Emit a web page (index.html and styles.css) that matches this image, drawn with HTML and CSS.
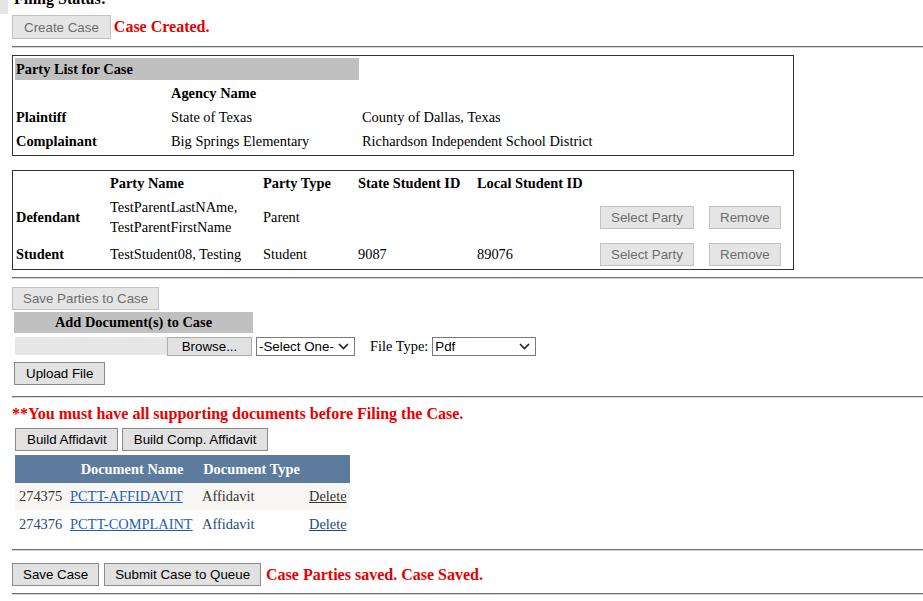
FILE: index.html
```html
<!DOCTYPE html>
<html>
<head>
<meta charset="utf-8">
<title>Case</title>
<link rel="stylesheet" href="styles.css">
</head>
<body>
<div class="top">
  <div class="gutter"></div>
  <div class="filing">Filing Status:</div>
</div>
<div class="page">
  <div class="row create-row">
    <button class="btn create" disabled>Create Case</button>
    <span class="msg">Case Created.</span>
  </div>
  <hr class="rule r1">

  <table class="box agency">
    <colgroup><col class="a1"><col class="a2"><col class="a3"></colgroup>
    <tr><td colspan="2" class="caption-cell">Party List for Case</td><td></td></tr>
    <tr><td></td><th>Agency Name</th><td></td></tr>
    <tr><th>Plaintiff</th><td>State of Texas</td><td>County of Dallas, Texas</td></tr>
    <tr class="last"><th>Complainant</th><td>Big Springs Elementary</td><td>Richardson Independent School District</td></tr>
  </table>

  <table class="box parties">
    <colgroup><col class="p1"><col class="p2"><col class="p3"><col class="p4"><col class="p5"><col class="p6"><col class="p7"></colgroup>
    <tr class="head"><td></td><th>Party Name</th><th>Party Type</th><th>State Student ID</th><th>Local Student ID</th><td></td><td></td></tr>
    <tr class="def"><th>Defendant</th><td class="two">TestParentLastNAme,<br>TestParentFirstName</td><td>Parent</td><td></td><td></td><td><button class="btn sm" disabled>Select Party</button></td><td><button class="btn sm" disabled>Remove</button></td></tr>
    <tr class="stu"><th>Student</th><td>TestStudent08, Testing</td><td>Student</td><td>9087</td><td>89076</td><td><button class="btn sm" disabled>Select Party</button></td><td><button class="btn sm" disabled>Remove</button></td></tr>
  </table>

  <hr class="rule r2">
  <button class="btn sm save-parties" disabled>Save Parties to Case</button>

  <div class="docs">
    <div class="doc-head">Add Document(s) to Case</div>
    <div class="row file-row">
      <div class="file"><span class="file-field"></span><span class="browse">Browse...</span></div>
      <div class="select sel1"><span>-Select One-</span><svg width="11" height="7" viewBox="0 0 11 7"><path d="M1 1 L5.5 5.5 L10 1" fill="none" stroke="#222" stroke-width="1.6"/></svg></div>
      <span class="ftype">File Type:</span>
      <div class="select sel2"><span>Pdf</span><svg width="11" height="7" viewBox="0 0 11 7"><path d="M1 1 L5.5 5.5 L10 1" fill="none" stroke="#222" stroke-width="1.6"/></svg></div>
    </div>
    <button class="btn sm upload">Upload File</button>
  </div>

  <hr class="rule r3">
  <div class="warn">**You must have all supporting documents before Filing the Case.</div>
  <div class="row build-row">
    <button class="btn sm wide">Build Affidavit</button>
    <button class="btn sm wide">Build Comp. Affidavit</button>
  </div>

  <table class="grid">
    <colgroup><col class="g-c1"><col class="g-c2"><col class="g-c3"><col class="g-c4"></colgroup>
    <tr class="ghead"><th></th><th>Document Name</th><th>Document Type</th><th></th></tr>
    <tr class="g1"><td>274375</td><td><a href="#" class="doclink">PCTT-AFFIDAVIT</a></td><td>Affidavit</td><td><a href="#" class="del">Delete</a></td></tr>
    <tr class="g2"><td>274376</td><td><a href="#" class="doclink">PCTT-COMPLAINT</a></td><td>Affidavit</td><td><a href="#" class="del">Delete</a></td></tr>
  </table>

  <hr class="rule r4">
  <div class="row save-row">
    <button class="btn sm">Save Case</button>
    <button class="btn sm">Submit Case to Queue</button>
    <span class="msg">Case Parties saved. Case Saved.</span>
  </div>
  <hr class="rule r5">
</div>
</body>
</html>
```

FILE: styles.css
```css
* { box-sizing: border-box; }
html, body { margin: 0; padding: 0; background: #fff; }
body {
  font-family: "Liberation Serif", "Times New Roman", serif;
  font-size: 14.4px;
  color: #000;
  overflow: hidden;
}
.top { display: flex; height: 15px; }
.gutter { width: 8px; height: 14px; background: #e4e4e4; }
.filing { margin: -9px 0 0 6px; font-weight: bold; font-size: 16px; line-height: 16px; }

.page { padding-left: 12px; }
.row { display: flex; align-items: center; }

.btn {
  font-family: "Liberation Sans", Arial, sans-serif;
  font-size: 13.33px;
  height: 24px;
  padding: 0 10px;
  margin: 0;
  background: #e1e1e1;
  border: 1px solid #8a8a8a;
  border-radius: 0;
  color: #000;
}
.btn:disabled { color: #6d6d6d; border-color: #c2c2c2; background: #e5e5e5; }
.btn.sm { height: 23px; }
.btn.create { padding: 0 11px; }
.btn.wide { padding: 0 10px 0 11px; }

.msg { color: #e80000; font-weight: bold; font-size: 16px; margin-left: 3px; }

.rule {
  border: 0;
  height: 2px;
  border-top: 1px solid #6e6e6e;
  border-bottom: 1px solid #d6d6d6;
  margin: 0;
}
.r1 { margin-top: 7px; }
.r2 { margin-top: 7px; }
.r3 { margin-top: 11px; }
.r4 { margin-top: 11px; }
.r5 { margin-top: 7px; }

/* bordered party tables */
.box {
  width: 782px;
  border: 1px solid #333;
  border-collapse: separate;
  border-spacing: 2px;
  table-layout: fixed;
}
.box td, .box th {
  padding: 0 1px;
  text-align: left;
  vertical-align: middle;
  white-space: nowrap;
  font-weight: normal;
}
.box th { font-weight: bold; }
.box .caption-cell { background: #c0c0c0; font-weight: bold; }
.agency { margin-top: 7px; }
.agency td, .agency th { height: 22px; }
.agency tr.last td, .agency tr.last th { height: 23px; }
.a1 { width: 153px; }
.a2 { width: 189px; }

.parties { margin-top: 14px; }
.p1 { width: 92px; }
.p2 { width: 151px; }
.p3 { width: 93px; }
.p4 { width: 117px; }
.p5 { width: 121px; }
.p6 { width: 107px; }
.parties .head td, .parties .head th { height: 20px; }
.parties .def td, .parties .def th { height: 44px; }
.parties .stu td, .parties .stu th { height: 26px; }
.two { line-height: 20px; }

.save-parties { margin-top: 8px; display: block; }

.docs { padding-left: 2px; }
.doc-head {
  width: 239px;
  height: 21px;
  margin-top: 2px;
  background: #c0c0c0;
  font-weight: bold;
  text-align: center;
  line-height: 21px;
}
.file-row { margin-top: 4px; margin-left: 1px; height: 19px; }
.file { display: flex; width: 237px; height: 19px; }
.file-field { flex: 1; background: #e6e6e6; height: 18px; }
.browse {
  width: 85px;
  height: 19px;
  border: 1px solid #adadad;
  background: #e1e1e1;
  font-family: "Liberation Sans", Arial, sans-serif;
  font-size: 13.33px;
  line-height: 17px;
  text-align: center;
}
.select {
  display: flex;
  align-items: center;
  justify-content: space-between;
  height: 19px;
  border: 1px solid #7a7a7a;
  background: #fff;
  padding: 0 5px 0 2px;
  font-family: "Liberation Sans", Arial, sans-serif;
  font-size: 13.33px;
}
.sel1 { width: 99px; margin-left: 4px; }
.sel2 { width: 104px; margin-left: 4px; }
.ftype { margin-left: 15px; }
.upload { margin-top: 6px; display: block; padding: 0 11px; }

.warn {
  margin-top: 6px;
  color: #e80000;
  font-weight: bold;
  font-size: 16px;
  line-height: 20px;
}
.build-row { margin-top: 4px; margin-left: 3px; gap: 4px; }

.grid {
  margin-top: 4px;
  margin-left: 3px;
  width: 335px;
  border-collapse: collapse;
  table-layout: fixed;
}
.g-c1 { width: 51px; }
.g-c2 { width: 132px; }
.g-c3 { width: 107px; }
.g-c4 { width: 45px; }
.grid th, .grid td { padding: 0 4px; white-space: nowrap; }
.ghead th {
  height: 28px;
  background: #5d7b9d;
  color: #fff;
  font-weight: bold;
  text-align: center;
}
.g1 td { height: 27px; background: #f7f6f3; color: #333; }
.g2 td { height: 28px; background: #fff; color: #284775; }
.doclink { color: #1c5eb8; text-decoration: underline; }
.del { color: inherit; text-decoration: underline; }

.save-row { margin-top: 12px; gap: 5px; }
.save-row .msg { margin-left: 0; }
```
